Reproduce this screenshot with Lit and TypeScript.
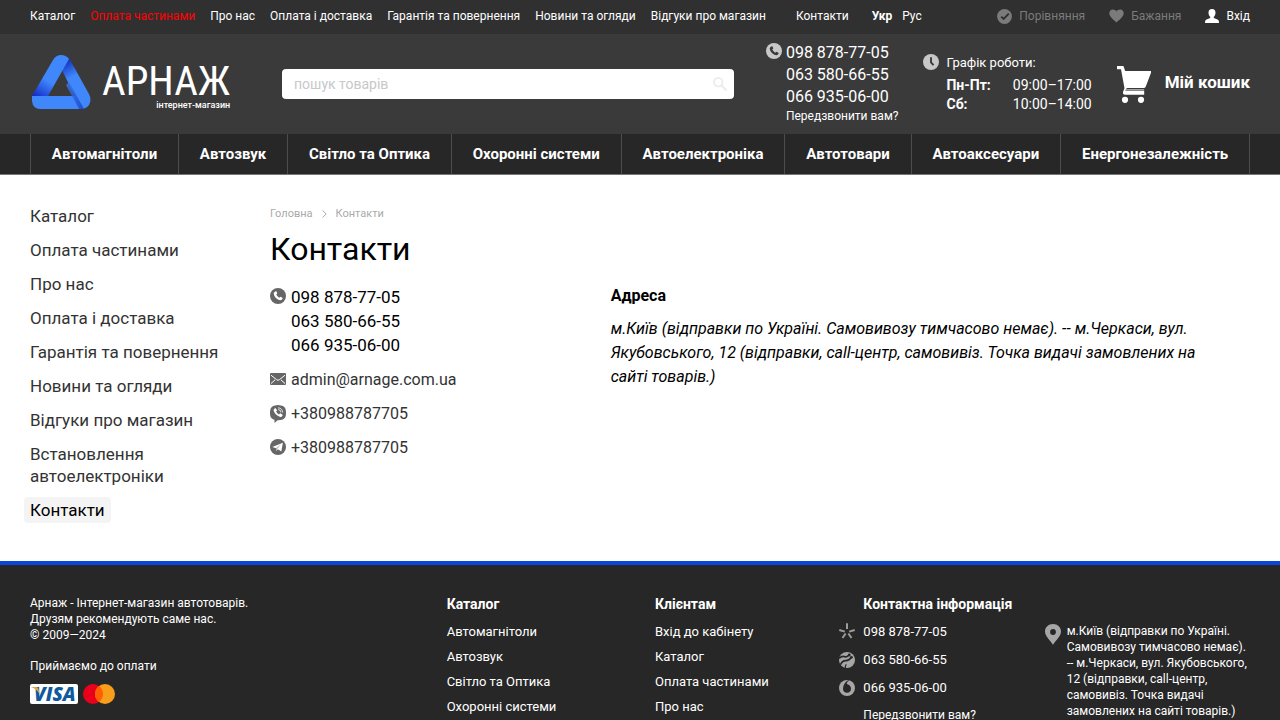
import { LitElement, html, css, svg } from "lit";
import { customElement } from "lit/decorators.js";
import { classMap } from "lit/directives/class-map.js";

const infoPages = [
  "Каталог",
  "Оплата частинами",
  "Про нас",
  "Оплата і доставка",
  "Гарантія та повернення",
  "Новини та огляди",
  "Відгуки про магазин",
  "Встановлення автоелектроніки",
  "Контакти",
];
const topPages = infoPages.filter((p) => !p.startsWith("Встановлення"));
const categories = [
  "Автомагнітоли",
  "Автозвук",
  "Світло та Оптика",
  "Охоронні системи",
  "Автоелектроніка",
  "Автотовари",
  "Автоаксесуари",
  "Енергонезалежність",
];
const phones = ["098 878-77-05", "063 580-66-55", "066 935-06-00"];
const handset = svg`<path d="M4.6 3.9 5.7 3.2Q6.2 3.1 6.5 3.6L7.2 5.1Q7.3 5.6 6.9 5.9L6.2 6.6Q7.2 8.7 9.3 9.8L10.1 9Q10.5 8.7 10.9 9L12.4 9.8Q12.8 10.1 12.6 10.6 12 12.4 10.2 12.3 7.800 12 5.900 10.100 3.900 8 3.700 5.600 3.700 4.500 4.600 3.900Z"/>`;

const icons = {
  compare: svg`<svg class="icon" width="15" height="15" viewBox="0 0 15 15"><circle cx="7.500" cy="7.500" r="7.400" fill="#7b7b7b"/><path d="m4.200 7.600 2.400 2.400 5.200-5.400" fill="none" stroke="#303030" stroke-width="1.900"/></svg>`,
  heart: svg`<svg class="icon" width="15" height="14" viewBox="0 0 15 14"><path d="M7.500 13.400C5.900 12 .6 8.400.3 4.600.1 2.200 1.700.5 3.700.5 5.400.5 6.800 1.200 7.500 2.300 8.200 1.200 9.600.5 11.300.5c2 0 3.600 1.700 3.400 4.100-.3 3.800-5.600 7.400-7.200 8.800Z" fill="#7b7b7b"/></svg>`,
  user: svg`<svg class="icon" width="14" height="14" viewBox="0 0 14 14"><path d="M7 0c2.400 0 3.600 1.600 3.500 3.900-.1 1.700-.8 3-1.700 3.900v1.100l3.700 1.500c1 .4 1.500 1.200 1.500 3.600H0c0-2.400.5-3.200 1.500-3.600l3.700-1.500V7.800C4.300 6.900 3.600 5.600 3.500 3.900 3.400 1.600 4.600 0 7 0Z" fill="#fff"/></svg>`,
  search: svg`<svg width="14" height="14" viewBox="0 0 14 14"><g fill="none" stroke="#ebebeb" stroke-width="1.700"><circle cx="5.200" cy="5.200" r="4.300"/><path d="m8.300 8.300 5.200 5.200" stroke-width="2"/></g></svg>`,
  phoneLight: svg`<svg class="icon" width="16" height="16" viewBox="0 0 16 16"><circle cx="8" cy="8" r="8" fill="#c8c8c8"/><g fill="#3a3a3a">${handset}</g></svg>`,
  phoneDark: svg`<svg class="icon" width="16" height="16" viewBox="0 0 16 16"><circle cx="8" cy="8" r="8" fill="#666"/><g fill="#fff">${handset}</g></svg>`,
  clock: svg`<svg class="icon" width="16" height="16" viewBox="0 0 16 16"><circle cx="8" cy="8" r="8" fill="#c8c8c8"/><path d="M8 3.200v5.200l2.500 2.800" fill="none" stroke="#3a3a3a" stroke-width="1.900"/></svg>`,
  cart: svg`<svg class="icon" width="34" height="37" viewBox="0 0 34 37"><path d="M0 0h6.400l1.800 4.900H34v1.800l-5.200 13.800q-.5 1.600-2.200 1.600H9.800l-1.400 3h18.800v3.600H8Q5.600 28.300 6 25.900l1.500-3.600L4 3.300H0Z" fill="#fff"/><path d="M8.800 23.100h18.400v1.700H8.400Z" fill="#a5a5a5"/><circle cx="8" cy="33.800" r="3.100" fill="#fff"/><circle cx="24" cy="33.800" r="3.100" fill="#fff"/></svg>`,
  mail: svg`<svg class="icon" width="16" height="16" viewBox="0 0 16 16"><rect y="2" width="16" height="12" rx="1" fill="#666"/><path d="m1 4.200 5.600 4.500q1.400 1.100 2.800 0L15 4.200M1 12.500l4-3.600m10 3.600-4-3.600" fill="none" stroke="#fff" stroke-width="1"/></svg>`,
  viber: svg`<svg class="icon" width="16" height="18" viewBox="0 0 16 18"><path d="M5 .4Q8-.2 11 .4q4.300.8 4.700 4.400.6 3.200 0 6.200-.7 3.200-4.700 3.900l-3.400.4L4.500 18v-3.300Q.900 13.800.3 11-.3 8 .3 4.800.9 1.200 5 .4Z" fill="#666"/><path d="M3.700 4.400 4.900 3.200q.5-.3.900.2l1.100 1.500q.3.500-.1.900l-.7.800q.9 1.900 2.900 2.800l.8-.8q.4-.4.9-.1l1.600 1.100q.5.400.2.900-.8 1.700-2.200 1.500-2.800-.8-4.800-2.900-1.600-2-1.900-3.800 0-.6.100-.9Z" fill="#fff"/><path d="M8 2.800q4.400.3 4.600 4.700M8.200 4.500q2.600.2 2.700 2.800" fill="none" stroke="#fff" stroke-width=".8"/></svg>`,
  telegram: svg`<svg class="icon" width="16" height="16" viewBox="0 0 16 16"><circle cx="8" cy="8" r="8" fill="#666"/><path d="M2.300 8 12.900 3.700 11.300 12.500 8 10.200 6.300 11.900 6 9.200Z" fill="#fff"/><path d="m6 9.200 5-4-3.700 4.600-1 2.100Z" fill="#666" fill-opacity=".55"/></svg>`,
  kyivstar: svg`<svg class="icon" width="16" height="17" viewBox="0 0 16 17"><g stroke="#9c9c9c" stroke-width="2" fill="none"><path d="M8 .3v5.800M.3 7l5.500 1.600M15.700 7l-5.500 1.600M3.500 15l3.100-4.500M12.500 15l-3.100-4.500"/></g></svg>`,
  life: svg`<svg class="icon" width="16" height="16" viewBox="0 0 16 16"><circle cx="8" cy="8" r="8" fill="#a6a6a6"/><path d="M0 6.300q3-2.900 5.900-1.500 2 .3 3.800-1.500M1.500 12.800q1.500-4.300 5.500-4.200 3.200 0 5.600-3.500" fill="none" stroke="#272727" stroke-width="1.700"/><path d="M6.500 16q-.6-2.400.9-3.400" fill="none" stroke="#272727" stroke-width="1.200"/><circle cx="10.300" cy="3" r="1.400" fill="#272727"/><circle cx="12.500" cy="5.300" r="1.300" fill="#272727"/></svg>`,
  vodafone: svg`<svg class="icon" width="16" height="16" viewBox="0 0 16 16"><circle cx="8" cy="8" r="8" fill="#a6a6a6"/><path d="M10.400.5Q7.800 1.300 7.700 4q4.400 1.100 4.300 4.900-.4 3.700-4 3.900-3.800-.2-4-4Q4.100 3.200 9 .2Z" fill="#272727"/></svg>`,
  pin: svg`<svg class="icon" width="16" height="21" viewBox="0 0 16 21"><path d="M8 0c4.600 0 8 3.300 8 7.500 0 4.600-4.900 8.500-8 13.200C4.900 16 0 12.100 0 7.500 0 3.300 3.400 0 8 0Z" fill="#a6a6a6"/><circle cx="8" cy="8" r="2.900" fill="#272727"/></svg>`,
};

@customElement("app-root")
export class AppRoot extends LitElement {
  static styles = css`
    :host {
      display: block;
      font: 16px/24px Roboto, "Noto Sans", sans-serif;
      color: #000;
      background: #fff;
    }
    * { box-sizing: border-box; }
    a { color: inherit; text-decoration: none; }
    ul, h1, h2, p, dl, dd, address { margin: 0; padding: 0; }
    ul { list-style: none; }
    button { font: inherit; color: inherit; background: none; border: 0; padding: 0; cursor: pointer; text-align: left; }
    .icon { display: block; flex: none; }

    .topbar {
      display: flex;
      align-items: center;
      height: 34px;
      padding: 0 30px 2px;
      background: #303030;
      color: #fff;
      font-size: 12px;
      line-height: 16px;
      white-space: nowrap;
    }
    .pages { display: flex; gap: 15px; }
    .pages li:last-child { margin-left: 15px; }
    .promo { color: #f00; }
    .langs { display: flex; gap: 10px; margin-left: 23px; }
    .current { font-weight: 700; }
    .account { display: flex; gap: 24px; margin-left: auto; }
    .account a { display: flex; align-items: center; gap: 7px; }
    .idle { color: #7b7b7b; }

    .header {
      display: flex;
      align-items: center;
      min-height: 100px;
      padding: 0 30px;
      background: #3a3a3a;
      color: #fff;
      white-space: nowrap;
    }
    .logo { display: flex; align-items: center; gap: 11px; padding: 0 2px 3px; width: 200px; }
    .brand { display: flex; flex-direction: column; align-items: flex-end; padding-top: 8px; }
    .name { font: 400 41px/37px "Roboto Condensed", Roboto, sans-serif; }
    .tagline { font: 500 9px/10px Roboto, sans-serif; }
    .search { position: relative; flex: 1; margin: 0 32px 0 52px; }
    .search input {
      display: block;
      width: 100%;
      height: 30px;
      padding: 0 40px 0 12px;
      border: 0;
      border-radius: 4px;
      background: #fff;
      font: 14px/20px Roboto, sans-serif;
    }
    .search input::placeholder { color: #c8c8c8; opacity: 1; }
    .search button { position: absolute; top: 8px; right: 7px; line-height: 0; }
    .callus { display: flex; gap: 4px; padding-bottom: 2px; line-height: 22px; }
    .callus .icon { margin-top: 1px; }
    .callback { display: block; font-size: 12px; line-height: 16px; }
    .hours { display: flex; gap: 7px; margin-left: 25px; padding-bottom: 2px; font-size: 14px; line-height: 19px; }
    .hours .icon { margin-top: 1px; }
    .hours p { font-size: 13px; margin-bottom: 4px; }
    .schedule { display: grid; grid-template-columns: auto auto; column-gap: 22px; }
    .schedule dt { font-weight: 700; }
    .cart { display: flex; align-items: center; gap: 14px; margin-left: 25px; font-size: 17px; font-weight: 700; }
    .cart span { padding-bottom: 4px; }

    .nav { padding: 0 30px; background: #272727; border-bottom: 1px solid #777; }
    .categories { display: flex; border-left: 1px solid #4d4d4d; }
    .categories li { flex: auto; border-right: 1px solid #4d4d4d; }
    .categories a {
      display: block;
      padding: 10px 0;
      font-size: 15px;
      line-height: 20px;
      font-weight: 700;
      color: #fff;
      text-align: center;
      white-space: nowrap;
    }

    .body { display: flex; padding: 28px 30px 38px; }
    .side { width: 200px; margin-right: 40px; flex: none; font-size: 17px; line-height: 22px; color: #333; }
    .side li { margin-bottom: 8px; }
    .side a { display: inline-block; vertical-align: top; margin-left: -6px; padding: 2px 6px; border-radius: 4px; }
    .side li:last-child { margin-bottom: 0; }
    .side .active { background: #f4f4f4; color: #000; }
    .content { flex: 1; padding-top: 3px; }
    .crumbs { display: flex; align-items: center; gap: 9px; font-size: 11px; line-height: 16px; color: #aaa; }
    h1 { font-size: 32px; line-height: 40px; font-weight: 400; margin: 7px 0 16px; }
    .cols { display: grid; grid-template-columns: 1fr 2fr; gap: 21px; }
    .contacts { display: grid; gap: 10px; color: #333; }
    .contacts li { display: flex; gap: 5px; }
    .contacts .icon { margin-top: 3px; }
    .main-phones { padding-bottom: 1px; font-size: 17px; color: #000; }
    .main-phones a, .callus a { display: block; }
    .cols h2 { font-size: 16px; line-height: 22px; margin-bottom: 10px; }
    .cols address { max-width: 620px; font-style: italic; }

    .footer { background: #272727; border-top: 4px solid #0a46dc; color: #fff; font-size: 13px; line-height: 16px; }
    .foot-grid { display: grid; grid-template-columns: repeat(6, 1fr); gap: 30px; padding: 30px 30px 24px; }
    .about { grid-column: span 2; font-size: 12px; }
    .about p { margin-bottom: 15px; }
    .about .accept { margin-bottom: 10px; }
    .pay { display: flex; gap: 5px; }
    .visa { width: 48px; height: 20px; overflow: visible; }
    .footer h2 { font-size: 14px; line-height: 18px; margin-bottom: 10px; white-space: nowrap; }
    .links { display: grid; gap: 9px; padding-top: 1px; }
    .foot-phones { display: grid; gap: 12px; }
    .foot-phones a { display: flex; align-items: center; gap: 8px; margin-left: -24px; }
    .foot-call { margin-top: 11px; font-size: 12px; white-space: nowrap; }
    .place { display: flex; gap: 6px; margin: 28px 0 0 -27px; font-size: 12px; font-style: normal; }
    .place .icon { margin-top: 1px; }
  `;

  private phoneLinks() {
    return phones.map((p) => html`<a href="tel:${p.replace(/\D/g, "")}">${p}</a>`);
  }

  private footLinks(title: string, items: string[]) {
    return html`<nav>
      <h2>${title}</h2>
      <ul class="links">${items.map((t) => html`<li><a href="#">${t}</a></li>`)}</ul>
    </nav>`;
  }

  render() {
    return html`
      <div class="topbar">
        <ul class="pages">
          ${topPages.map((p) => html`<li><a href="#" class=${classMap({ promo: p === "Оплата частинами" })}>${p}</a></li>`)}
        </ul>
        <div class="langs"><a href="#" class="current">Укр</a><a href="#">Рус</a></div>
        <div class="account">
          <a href="#" class="idle">${icons.compare}Порівняння</a>
          <a href="#" class="idle">${icons.heart}Бажання</a>
          <a href="#">${icons.user}Вхід</a>
        </div>
      </div>
      <header class="header">
        <a class="logo" href="#">
          <svg class="icon" width="59" height="55" viewBox="0 0 59 55">
            <defs>
              <linearGradient id="left" gradientUnits="userSpaceOnUse" x1="16" y1="26" x2="4" y2="44"><stop offset="0" stop-color="#3f87fb"/><stop offset="1" stop-color="#0f24c4"/></linearGradient>
              <linearGradient id="right" gradientUnits="userSpaceOnUse" x1="32" y1="8" x2="40" y2="22"><stop offset="0" stop-color="#1636c0"/><stop offset="1" stop-color="#3f87fb"/></linearGradient>
              <linearGradient id="base" gradientUnits="userSpaceOnUse" x1="32" y1="0" x2="51" y2="0"><stop offset="0" stop-color="#3f87fb"/><stop offset="1" stop-color="#1a3cc4"/></linearGradient>
            </defs>
            <path d="M30 15 37 3 57 39Q60 45 57 50 54 54 49 54Z" fill="url(#right)"/>
            <path d="M0 41h43l7 13H8Q1 54 0 46Z" fill="#3f87fb"/>
            <path d="M40 41 34 30 37 27 52 54H47Z" fill="url(#base)" fill-opacity=".8"/>
            <path d="M0 41 21 5Q24 0 29 0 34 0 37 4L16 41Z" fill="url(#left)"/>
          </svg>
          <span class="brand"><span class="name">АРНАЖ</span><span class="tagline">інтернет-магазин</span></span>
        </a>
        <form class="search" role="search">
          <input type="text" placeholder="пошук товарів" aria-label="пошук товарів" />
          <button type="button" aria-label="Пошук">${icons.search}</button>
        </form>
        <div class="callus">
          ${icons.phoneLight}
          <div>${this.phoneLinks()}<button class="callback" type="button">Передзвонити вам?</button></div>
        </div>
        <div class="hours">
          ${icons.clock}
          <div>
            <p>Графік роботи:</p>
            <dl class="schedule"><dt>Пн-Пт:</dt><dd>09:00–17:00</dd><dt>Сб:</dt><dd>10:00–14:00</dd></dl>
          </div>
        </div>
        <a class="cart" href="#">${icons.cart}<span>Мій кошик</span></a>
      </header>
      <nav class="nav">
        <ul class="categories">${categories.map((c) => html`<li><a href="#">${c}</a></li>`)}</ul>
      </nav>
      <div class="body">
        <nav class="side">
          <ul>${infoPages.map((p) => html`<li><a href="#" class=${classMap({ active: p === "Контакти" })}>${p}</a></li>`)}</ul>
        </nav>
        <main class="content">
          <div class="crumbs">
            <a href="#">Головна</a>
            <svg width="5" height="8" viewBox="0 0 5 8"><path d="m.5.5 3.700 3.500L.5 7.500" fill="none" stroke="#aaa"/></svg>
            <span>Контакти</span>
          </div>
          <h1>Контакти</h1>
          <div class="cols">
            <ul class="contacts">
              <li class="main-phones">${icons.phoneDark}<div>${this.phoneLinks()}</div></li>
              <li>${icons.mail}<a href="mailto:admin@arnage.com.ua">admin@arnage.com.ua</a></li>
              <li>${icons.viber}<a href="#">+380988787705</a></li>
              <li>${icons.telegram}<a href="#">+380988787705</a></li>
            </ul>
            <section>
              <h2>Адреса</h2>
              <address>м.Київ (відправки по Україні. Самовивозу тимчасово немає). -- м.Черкаси, вул. Якубовського, 12 (відправки, call-центр, самовивіз. Точка видачі замовлених на сайті товарів.)</address>
            </section>
          </div>
        </main>
      </div>
      <footer class="footer">
        <div class="foot-grid">
          <div class="about">
            <p>Арнаж - Інтернет-магазин автотоварів.<br />Друзям рекомендують саме нас.<br />© 2009—2024</p>
            <p class="accept">Приймаємо до оплати</p>
            <div class="pay">
              <svg class="visa" viewBox="0 0 48 20">
                <rect width="48" height="20" rx="2" fill="#fff"/>
                <text x="4" y="17" font-family="Open Sans, sans-serif" font-size="19" font-weight="800" font-style="italic" fill="#0e5a9c">VISA</text>
                <path d="M1 3h5q2 0 2.500 2l1 5Q7 5 1 3Z" fill="#e8a63a"/>
              </svg>
              <svg width="32" height="20" viewBox="0 0 32 20"><circle cx="10" cy="10" r="10" fill="#eb001b"/><circle cx="22" cy="10" r="10" fill="#f79e1b"/><path d="M16 2a10 10 0 0 1 0 16 10 10 0 0 1 0-16Z" fill="#ff5f00"/></svg>
            </div>
          </div>
          ${this.footLinks("Каталог", categories.slice(0, 4))}
          ${this.footLinks("Клієнтам", ["Вхід до кабінету", "Каталог", "Оплата частинами", "Про нас"])}
          <div>
            <h2>Контактна інформація</h2>
            <div class="foot-phones">
              ${[icons.kyivstar, icons.life, icons.vodafone].map((icon, i) => html`<a href="tel:${phones[i].replace(/\D/g, "")}">${icon}${phones[i]}</a>`)}
            </div>
            <button class="foot-call" type="button">Передзвонити вам?</button>
          </div>
          <address class="place">${icons.pin}<span>м.Київ (відправки по Україні. Самовивозу тимчасово немає). -- м.Черкаси, вул. Якубовського, 12 (відправки, call-центр, самовивіз. Точка видачі замовлених на сайті товарів.)</span></address>
        </div>
      </footer>
    `;
  }
}
